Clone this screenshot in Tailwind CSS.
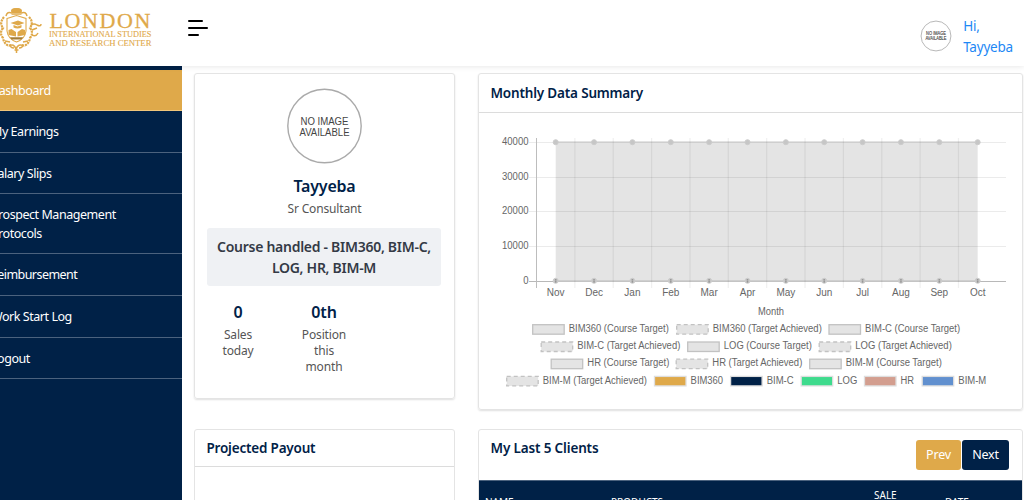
<!DOCTYPE html>
<html lang="en">
<head>
<meta charset="utf-8">
<title>Dashboard</title>
<script src="https://cdn.jsdelivr.net/npm/@tailwindcss/browser@4"></script>
</head>
<body class="h-[500px] w-[1024px] overflow-hidden bg-white font-['Noto_Sans',sans-serif] text-[#002147]">
<header class="relative z-10 flex h-[66px] items-start bg-white shadow-[0_0_6px_rgba(0,0,0,0.12)]">
  <svg class="h-[60px] w-[160px] shrink-0" viewBox="0 0 160 60" fill="none" stroke="#dfa94a">
    <g stroke-width="1.1">
      <path d="M7 18.500 16.500 15.500 26 18.500V31Q25 39 16.500 42Q8 39 7 31Z"/>
      <path d="M4 17Q-1 23 3 28Q-1 33 3 38Q4 44 9 46M29 17Q34 22 30 28Q34 33 30 38Q29 44 24 46" stroke-width="2.200" stroke-dasharray="2.200 .8"/>
      <path d="M0 22l-2 4M31 25q3-2 6 0q4 2 4-1M32 35q4 2 6-2M32 30l5-2M6 16q1-5 6-3M27 16q-1-5-6-3M9 46q5-3 7 3q2-6 8-3M10 44q0 4 4 4M23 44q0 4-4 4M5 41l5 1M28 41l-5 1" stroke-width="1.500"/>
      <path d="M11.500 14h10M12 12q-1-2.500 2-3h5q3 .5 2 3M16.500 47v6M14.500 50h4" stroke-width="1.500"/>
    </g>
    <g fill="#dfa94a" stroke="none">
      <path d="M12 13q-1-5 4.500-5t4.500 5Z"/>
      <path d="M10.500 23 18 20.500 24.500 23 18 25.500ZM13.500 25v2.500q4 2 8 0V25l-4 1.600ZM8.500 30l3-1 4.500 3v4.500l-7.500-1.500ZM25 30l-3-1-4.500 3v4.500l7.500-1.500Z"/>
      <path d="M10 37.300h13l-1.500 2.300h-10Z" fill="#a57e38"/>
    </g>
    <g fill="#dfa94a" font-family="Liberation Serif, serif">
      <text x="49.500" y="28" font-size="22" textLength="101" stroke-width=".3">LONDON</text>
      <text x="49" y="37.300" font-size="7.500" textLength="102.500" lengthAdjust="spacingAndGlyphs" stroke-width=".1">INTERNATIONAL STUDIES</text>
      <text x="49" y="46.300" font-size="7.500" textLength="102.500" lengthAdjust="spacingAndGlyphs" stroke-width=".1">AND RESEARCH CENTER</text>
    </g>
  </svg>
  <button class="mt-5 ml-7 flex flex-col gap-[5px]" aria-label="Toggle menu">
    <span class="h-[2px] w-[15px] rounded-full bg-black"></span>
    <span class="h-[2px] w-5 rounded-full bg-black"></span>
    <span class="h-[2px] w-[11px] rounded-full bg-black"></span>
  </button>
  <div class="mt-[16px] mr-[11px] ml-auto flex">
    <svg class="mt-1 h-8 w-8" viewBox="0 0 76 76"><circle cx="38" cy="38" r="35.500" fill="#fff" stroke="#aaa" stroke-width="2"/><g fill="#444" font-family="Liberation Sans" font-size="11" stroke="#444" stroke-width=".3"><text x="14.500" y="36" textLength="47" lengthAdjust="spacingAndGlyphs">NO IMAGE</text><text x="13" y="48" textLength="50" lengthAdjust="spacingAndGlyphs">AVAILABLE</text></g></svg>
    <div class="ml-[11px] text-[13.5px] leading-[21px] tracking-[-0.2px] text-[#1e88f5]">Hi,<br>Tayyeba</div>
  </div>
</header>
<div class="flex h-[434px]">
  <nav class="w-[182px] shrink-0 overflow-hidden bg-[#002147] pt-[3.5px] text-[12.5px] leading-[18.6px] tracking-[-0.45px] text-white">
    <a class="block border-b border-[#f0c67b] bg-[#dfa94a] pt-[12px] pb-[10px]"><span class="-ml-[10px] block">Dashboard</span></a>
    <a class="block border-b border-[#4b627e] pt-[12px] pb-[10px]"><span class="-ml-[9px] block">My Earnings</span></a>
    <a class="block border-b border-[#4b627e] pt-[12px] pb-[10px]"><span class="-ml-[9px] block">Salary Slips</span></a>
    <a class="block border-b border-[#4b627e] pt-[12px] pb-[10px]"><span class="-ml-[9px] block">Prospect Management<br>Protocols</span></a>
    <a class="block border-b border-[#4b627e] pt-[12px] pb-[10px]"><span class="-ml-[10px] block tracking-[-0.55px]">Reimbursement</span></a>
    <a class="block border-b border-[#4b627e] pt-[12px] pb-[10px]"><span class="-ml-[9px] block">Work Start Log</span></a>
    <a class="block border-b border-[#4b627e] pt-[12px] pb-[10px]"><span class="-ml-[9px] block">Logout</span></a>
  </nav>
  <main class="grid w-[841px] shrink-0 grid-cols-[261px_545px] grid-rows-[337px_90px] content-start gap-x-[23px] gap-y-[19px] pt-[7px] pl-3">
    <section class="flex h-[326px] flex-col items-center rounded-[3px] border border-[#e4e4e4] px-3 shadow-[0_1px_2px_rgba(0,0,0,0.13)]">
      <svg class="mt-[14px] h-[76px] w-[76px] shrink-0" viewBox="0 0 76 76"><circle cx="37.500" cy="38" r="36.700" fill="#fff" stroke="#aaa" stroke-width="1.400"/><g fill="#444" font-family="Liberation Sans" font-size="10"><text x="13.500" y="37" textLength="48" lengthAdjust="spacingAndGlyphs">NO IMAGE</text><text x="12.500" y="48.300" textLength="50" lengthAdjust="spacingAndGlyphs">AVAILABLE</text></g></svg>
      <h2 class="mt-[10px] text-[16px] leading-6 font-semibold tracking-[-0.2px]">Tayyeba</h2>
      <p class="mt-[2px] text-[12px] leading-[18px] tracking-[-0.15px] text-[#555]">Sr Consultant</p>
      <div class="mt-[10px] -ml-px h-[58px] w-[234px] rounded-[3px] bg-[#eff1f4] pt-2 text-center text-[14px] leading-[21px] font-semibold tracking-[-0.28px] text-[#343a46]">Course handled - BIM360, BIM-C,<br>LOG, HR, BIM-M</div>
      <div class="mt-[14px] grid w-full grid-cols-[62px_110px] text-center text-[12px] leading-4 tracking-[-0.15px] text-[#555]">
        <div><b class="block text-[16px] leading-6 font-semibold text-[#002147]">0</b><p class="mt-[3px]">Sales<br>today</p></div>
        <div><b class="block text-[16px] leading-6 font-semibold text-[#002147]">0th</b><p class="mt-[3px]">Position<br>this<br>month</p></div>
      </div>
    </section>
    <section class="rounded-[3px] border border-[#e4e4e4] shadow-[0_1px_2px_rgba(0,0,0,0.13)]">
      <h2 class="h-[39px] border-b border-[#dcdcdc] pt-[9px] pl-[11.5px] text-[13.5px] leading-5 font-semibold tracking-[-0.18px]">Monthly Data Summary</h2>
      <svg id="chart" class="block h-[296px] w-[543px]" viewBox="479 113 543 296" font-family="Liberation Sans, Arial, sans-serif" font-size="10" fill="#666"></svg>
    </section>
    <section class="h-[90px] rounded-t-[3px] border border-[#e4e4e4]">
      <h2 class="h-[37px] border-b border-[#dcdcdc] pt-2 pl-[11.5px] text-[13.5px] leading-5 font-semibold tracking-[-0.2px]">Projected Payout</h2>
    </section>
    <section class="h-[90px] rounded-t-[3px] border border-[#e4e4e4]">
      <div class="flex h-[50px] pt-[9px] pr-[13px] pl-[11.5px]">
        <h2 class="-mt-px text-[13.5px] leading-5 font-semibold tracking-[-0.15px]">My Last 5 Clients</h2>
        <button class="mt-[1px] ml-auto h-[30px] w-[45px] rounded-[3px] bg-[#dfa94a] pt-px text-[12.5px] tracking-[-0.2px] text-white">Prev</button>
        <button class="mt-[1px] ml-[1px] h-[30px] w-[47px] rounded-[3px] bg-[#002147] pt-px text-[12.5px] tracking-[-0.2px] text-white">Next</button>
      </div>
      <div class="flex h-[40px] border-t border-[#4b627e] bg-[#002147] text-[10px] leading-[14px] text-white">
        <span class="w-[126px] pt-[14px] pl-1.5">NAME</span><span class="w-[269px] pt-[14px] pl-1.5">PRODUCTS</span><span class="w-[71px] pt-[7px]">SALE<br>AMOUNT</span><span class="pt-[14px]">DATE</span>
      </div>
    </section>
  </main>
</div>
<script>
const months = ['Nov','Dec','Jan','Feb','Mar','Apr','May','Jun','Jul','Aug','Sep','Oct'];
const X0 = 555.7, STEP = 38.36;
let out = `<rect x="${X0}" y="142.500" width="${STEP * 11}" height="138.500" fill="#e4e4e4"/>`;
['40000','30000','20000','10000','0'].forEach((label, i) => {
  const y = [142.5, 177.5, 211.5, 246.5, 281.5][i];
  out += `<path d="M529 ${y}H1006" stroke="#000" stroke-opacity="${i === 4 ? .28 : .08}"/><text x="528.500" y="${y + 2.5}" text-anchor="end" textLength="${label.length * 5.3}" lengthAdjust="spacingAndGlyphs">${label}</text>`;
});
out += '<path d="M536.500 138V288" stroke="#bdbdbd"/>';
out += `<path d="M${X0} 142.200H${X0 + STEP * 11}" stroke="#c8c8c8" stroke-width="1.300"/><path d="M${X0} 281H${X0 + STEP * 11}" stroke="#c8c8c8" stroke-width="1.300"/>`;
months.forEach((m, i) => {
  const x = X0 + STEP * i;
  if (i < 11) out += `<path d="M${x + STEP / 2} 138V288" stroke="#000" stroke-opacity=".06" stroke-width="1.300"/>`;
  out += `<g fill="#c6c6c6" stroke="#cccccc"><circle cx="${x}" cy="142.200" r="2.500"/><circle cx="${x}" cy="280.800" r="2.500"/></g><path d="M${x} 279.200v3.300" stroke="#888" stroke-width="1.500" stroke-dasharray="1.300 .7"/>`;
  out += `<text x="${x}" y="296" text-anchor="middle">${m}</text>`;
});
out += '<text x="771" y="314.500" text-anchor="middle" textLength="26" lengthAdjust="spacingAndGlyphs">Month</text>';
const legend = [
  [532.5,329,'BIM360 (Course Target)',0,100],[676.5,329,'BIM360 (Target Achieved)',1,109],[828.8,329,'BIM-C (Course Target)',0,95],
  [541,346.3,'BIM-C (Target Achieved)',1,103],[687.5,346.3,'LOG (Course Target)',0,88],[819,346.3,'LOG (Target Achieved)',1,96.5],
  [551,363.5,'HR (Course Target)',0,82],[676,363.5,'HR (Target Achieved)',1,90],[809.5,363.5,'BIM-M (Course Target)',0,96],
  [506.5,380.7,'BIM-M (Target Achieved)',1,104],[654.3,380.7,'BIM360','#dfa94a',32.5],[730.4,380.7,'BIM-C','#002147',27],
  [801,380.7,'LOG','#3edb8d',20],[864.3,380.7,'HR','#d39e8f',13.5],[922,380.7,'BIM-M','#6190cf',28]
];
legend.forEach(([x, y, label, kind, w]) => {
  const solid = typeof kind === 'string';
  out += `<rect x="${x + .2}" y="${y - 4.3}" width="31.500" height="9.500" fill="${solid ? kind : '#e4e4e4'}" stroke="${solid ? '#dedede' : '#c2c2c2'}" stroke-width="1.300" ${kind === 1 ? 'stroke-dasharray="4 3"' : ''}/><text x="${x + 36.3}" y="${y + 2.8}" textLength="${w}" lengthAdjust="spacingAndGlyphs">${label}</text>`;
});
document.getElementById('chart').innerHTML = out;
</script>
</body>
</html>
